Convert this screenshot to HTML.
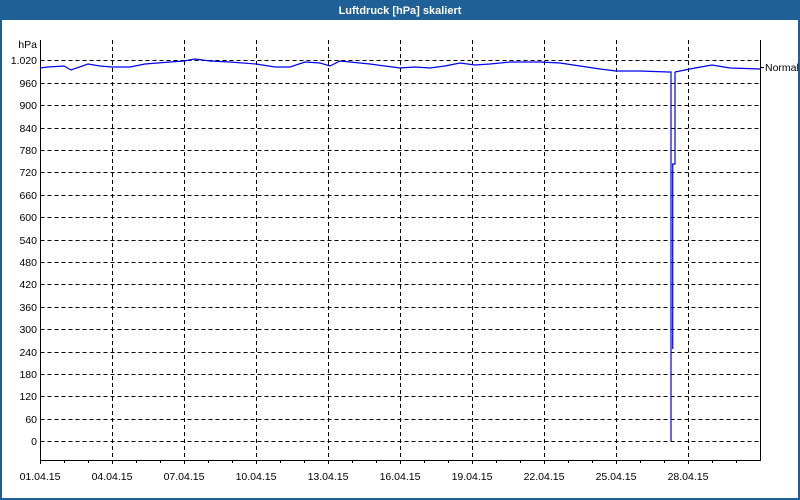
<!DOCTYPE html>
<html><head><meta charset="utf-8"><style>
html,body{margin:0;padding:0;width:800px;height:500px;overflow:hidden;background:#fff}
svg{display:block}
text{font-family:"Liberation Sans","DejaVu Sans",sans-serif;font-size:10.5px;fill:#000}
</style></head><body>
<svg width="800" height="500" viewBox="0 0 800 500" xmlns="http://www.w3.org/2000/svg">
<rect x="0" y="0" width="800" height="500" fill="#1f6097"/>
<rect x="2" y="20" width="796" height="478" fill="#fff"/>
<text x="400" y="14" text-anchor="middle" style="font-weight:bold;fill:#fff;font-size:11px">Luftdruck [hPa] skaliert</text>
<g stroke="#000" stroke-width="1" stroke-dasharray="4,3" shape-rendering="crispEdges">
<path d="M40.5 60.5H760M40.5 83.5H760M40.5 105.5H760M40.5 128.5H760M40.5 150.5H760M40.5 172.5H760M40.5 195.5H760M40.5 217.5H760M40.5 240.5H760M40.5 262.5H760M40.5 284.5H760M40.5 307.5H760M40.5 329.5H760M40.5 352.5H760M40.5 374.5H760M40.5 396.5H760M40.5 419.5H760M40.5 441.5H760"/>
<path d="M112.5 40V460M184.5 40V460M256.5 40V460M328.5 40V460M400.5 40V460M472.5 40V460M544.5 40V460M616.5 40V460M688.5 40V460"/>
</g>
<g stroke="#000" stroke-width="1" fill="none" shape-rendering="crispEdges">
<path d="M40.5 40V460.5H760.5V40"/>
<path d="M40.5 460v4M64.5 460v3M88.5 460v3M112.5 460v4M136.5 460v3M160.5 460v3M184.5 460v4M208.5 460v3M232.5 460v3M256.5 460v4M280.5 460v3M304.5 460v3M328.5 460v4M352.5 460v3M376.5 460v3M400.5 460v4M424.5 460v3M448.5 460v3M472.5 460v4M496.5 460v3M520.5 460v3M544.5 460v4M568.5 460v3M592.5 460v3M616.5 460v4M640.5 460v3M664.5 460v3M688.5 460v4M712.5 460v3M736.5 460v3"/>
<path d="M760 67.5h4"/>
</g>
<g fill="none" stroke="#0000ee" stroke-width="1.2">
<polyline points="40,68 48,67 64,66 71,70 88,64 100,66 112,67 130,67 145,64 170,62 184,61 195,59 210,61 230,62 256,64 275,67 290,67 305,62 320,63 330,66 340,61 350,62 370,64 385,66 400,68 415,67 430,68 445,66 460,63 475,65 490,64 510,62 540,62 560,63 580,66 600,69 616,71 640,71 668,72 671,72 671,441"/>
<polyline points="675,72 675,164 672.7,164 672.7,349"/>
<polyline points="675,72 685,70 695,68 712,65 730,68 760,69"/>
</g>
<g text-anchor="end">
<text x="37" y="48">hPa</text>
<text x="37" y="64">1.020</text><text x="37" y="87">960</text><text x="37" y="109">900</text><text x="37" y="132">840</text><text x="37" y="154">780</text><text x="37" y="176">720</text><text x="37" y="199">660</text><text x="37" y="221">600</text><text x="37" y="244">540</text><text x="37" y="266">480</text><text x="37" y="288">420</text><text x="37" y="311">360</text><text x="37" y="333">300</text><text x="37" y="356">240</text><text x="37" y="378">180</text><text x="37" y="400">120</text><text x="37" y="423">60</text><text x="37" y="445">0</text>
</g>
<text x="765" y="71">Normal</text>
<g text-anchor="middle">
<text x="40" y="480">01.04.15</text><text x="112" y="480">04.04.15</text><text x="184" y="480">07.04.15</text><text x="256" y="480">10.04.15</text><text x="328" y="480">13.04.15</text><text x="400" y="480">16.04.15</text><text x="472" y="480">19.04.15</text><text x="544" y="480">22.04.15</text><text x="616" y="480">25.04.15</text><text x="688" y="480">28.04.15</text>
</g>
</svg>
</body></html>
